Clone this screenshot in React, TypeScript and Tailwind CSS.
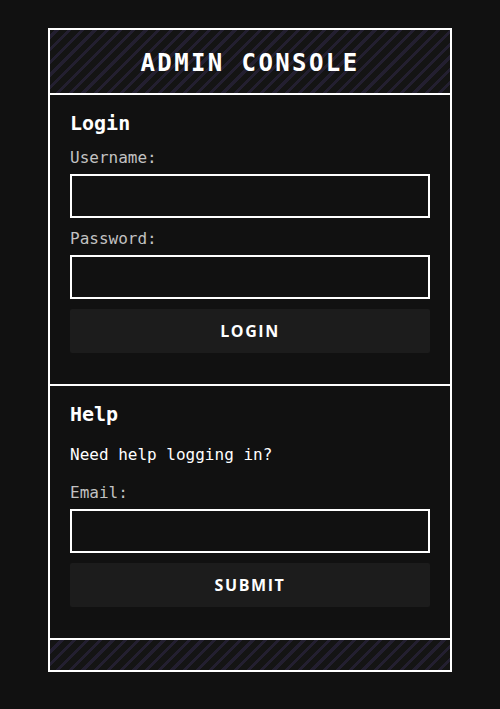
const mono = "font-['DejaVu_Sans_Mono',monospace]";
const stripes =
  "bg-[repeating-linear-gradient(-45deg,#141414_0px,#141414_6px,#231f30_6px,#231f30_9px)]";

function Field({ label, type = "text" }: { label: string; type?: string }) {
  return (
    <div className="flex flex-col">
      <label className={`${mono} text-[16px] leading-6 text-[#c2c2c2]`}>{label}</label>
      <input
        type={type}
        className="mt-1 h-11 w-full border-2 border-white bg-transparent px-2 text-white outline-none"
      />
    </div>
  );
}

function ActionButton({ children }: { children: string }) {
  return (
    <button className="mt-[10px] h-11 w-full rounded-[2px] bg-[#1c1c1c] font-['Open_Sans',sans-serif] text-[16px] font-bold tracking-[0.1em] text-white">
      {children}
    </button>
  );
}

export default function App() {
  return (
    <div className="min-h-[709px] bg-[#111111] px-12 pt-[28px]">
      <div className="border-2 border-white">
        <header className={`${stripes} flex h-[65px] items-center justify-center border-b-2 border-white pt-[2px]`}>
          <h1 className={`${mono} text-[24px] font-bold tracking-[0.1em] text-white`}>ADMIN CONSOLE</h1>
        </header>

        <section className="border-b-2 border-white px-5 pb-[31px] pt-4">
          <h2 className={`${mono} text-[20px] font-bold leading-6 text-white`}>Login</h2>
          <div className="mt-[11px] flex flex-col gap-[9px]">
            <Field label="Username:" />
            <Field label="Password:" type="password" />
          </div>
          <ActionButton>LOGIN</ActionButton>
        </section>

        <section className="border-b-2 border-white px-5 pb-[31px] pt-4">
          <h2 className={`${mono} text-[20px] font-bold leading-6 text-white`}>Help</h2>
          <p className={`${mono} mt-[17px] text-[16px] leading-6 text-white`}>Need help logging in?</p>
          <div className="mt-[14px]">
            <Field label="Email:" type="email" />
          </div>
          <ActionButton>SUBMIT</ActionButton>
        </section>

        <footer className={`${stripes} h-[30px]`} />
      </div>
    </div>
  );
}
